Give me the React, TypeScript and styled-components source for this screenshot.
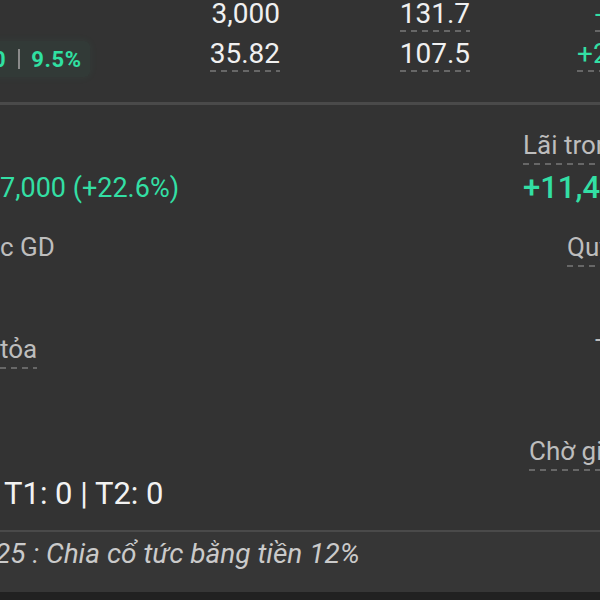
import styled, { createGlobalStyle, css } from "styled-components";

const GlobalStyle = createGlobalStyle`
  html, body {
    margin: 0;
    padding: 0;
    background: #333333;
  }
  body {
    font-family: Roboto, "Noto Sans", sans-serif;
  }
  #root {
    width: 600px;
    height: 600px;
    overflow: hidden;
  }
`;

const dashed = css`
  background-image: linear-gradient(to right, #676767 0 6px, transparent 6px);
  background-size: 11px 2px;
  background-repeat: repeat-x;
  background-position: left bottom;
`;

const Screen = styled.div`
  width: 600px;
  height: 600px;
  overflow: hidden;
  background: #333333;
  display: flex;
  flex-direction: column;
  color: #f0f0f0;
`;

const QuoteTable = styled.div`
  display: grid;
  grid-template-columns: 100px 180px 190px 130px;
  grid-auto-rows: 40px;
  height: 102px;
  flex-shrink: 0;
`;

const Value = styled.span<{ $dashed?: boolean }>`
  justify-self: end;
  align-self: start;
  font-size: 28px;
  line-height: 28px;
  padding-bottom: 4px;
  color: #f0f0f0;
  white-space: nowrap;
  ${(p) => p.$dashed && dashed}
`;

const Change = styled.span<{ $shift: number }>`
  justify-self: start;
  align-self: start;
  margin-left: ${(p) => p.$shift}px;
  font-size: 28px;
  line-height: 28px;
  padding-bottom: 4px;
  color: #33dfa4;
  white-space: nowrap;
  ${dashed}
`;

const Chip = styled.div`
  align-self: start;
  justify-self: start;
  margin: 1px 0 0 -7px;
  height: 36px;
  display: inline-flex;
  align-items: center;
  padding-right: 8px;
  background: rgba(48, 224, 160, 0.045);
  box-shadow: 0 0 10px rgba(48, 224, 160, 0.06);
  border-radius: 0 6px 6px 0;
  font-size: 22px;
  font-weight: 700;
  letter-spacing: 0.6px;
  color: #30e0a2;
`;

const ChipBar = styled.span`
  width: 2px;
  height: 20px;
  margin: 0 11px 0 12px;
  background: #8a8a8a;
`;

const Divider = styled.div<{ $size: number }>`
  height: ${(p) => p.$size}px;
  background: #4a4a4a;
  flex-shrink: 0;
`;

const Summary = styled.div`
  display: flex;
  height: 425px;
  flex-shrink: 0;
  padding-top: 25px;
  box-sizing: border-box;
`;

const Column = styled.div<{ $width?: number }>`
  display: flex;
  flex-direction: column;
  gap: 28px;
  width: ${(p) => (p.$width ? `${p.$width}px` : "auto")};
  flex: ${(p) => (p.$width ? "none" : 1)};
  white-space: nowrap;
`;

const Stat = styled.div`
  display: flex;
  flex-direction: column;
  align-items: flex-start;
  gap: 7px;
  height: 74px;
`;

const Label = styled.span<{ $dashed?: boolean; $indent?: number; $raise?: number }>`
  display: inline-block;
  height: 30px;
  margin-left: ${(p) => p.$indent ?? 0}px;
  margin-top: ${(p) => -(p.$raise ?? 0)}px;
  padding-bottom: 5px;
  font-size: 26px;
  line-height: 30px;
  color: #bdbdbd;
  ${(p) => p.$dashed && dashed}
`;

const StatValue = styled.span<{
  $tone: "up" | "plain";
  $size: number;
  $weight?: number;
  $indent?: number;
}>`
  height: 32px;
  margin-left: ${(p) => p.$indent ?? 0}px;
  font-size: ${(p) => p.$size}px;
  line-height: 32px;
  font-weight: ${(p) => p.$weight ?? 400};
  color: ${(p) => (p.$tone === "up" ? "#33dfa4" : "#f2f2f2")};
`;

const NewsBar = styled.div`
  height: 60px;
  flex-shrink: 0;
  background: #363636;
  padding-top: 7px;
  box-sizing: border-box;
  font-size: 28px;
  line-height: 30px;
  font-style: italic;
  color: #cacaca;
  white-space: nowrap;

  span {
    margin-left: -5px;
  }
`;

const BottomShade = styled.div`
  flex: 1;
  background: #212121;
`;

const App = () => {
  return (
    <Screen>
      <GlobalStyle />
      <QuoteTable>
        <span />
        <Value>3,000</Value>
        <Value $dashed>131.7</Value>
        <Change $shift={125}>-</Change>

        <Chip>
          0<ChipBar />9.5%
        </Chip>
        <Value $dashed>35.82</Value>
        <Value $dashed>107.5</Value>
        <Change $shift={107}>+2.10</Change>
      </QuoteTable>
      <Divider $size={3} />
      <Summary>
        <Column $width={523}>
          <Stat>
            <Label />
            <StatValue $tone="up" $size={27}>
              7,000 (+22.6%)
            </StatValue>
          </Stat>
          <Stat>
            <Label>c GD</Label>
          </Stat>
          <Stat>
            <Label $dashed>tỏa</Label>
          </Stat>
          <Stat>
            <Label />
            <StatValue $tone="plain" $size={31} $indent={4}>
              T1: 0 | T2: 0
            </StatValue>
          </Stat>
        </Column>
        <Column>
          <Stat>
            <Label $dashed>Lãi trong ngày</Label>
            <StatValue $tone="up" $size={31} $weight={500}>
              +11,400,000
            </StatValue>
          </Stat>
          <Stat>
            <Label $dashed $indent={44}>
              Quyền
            </Label>
          </Stat>
          <Stat>
            <Label $indent={72} $raise={10}>
              -
            </Label>
          </Stat>
          <Stat>
            <Label $dashed $indent={6}>
              Chờ giao
            </Label>
          </Stat>
        </Column>
      </Summary>
      <Divider $size={2} />
      <NewsBar>
        <span>25 : Chia cổ tức bằng tiền 12%</span>
      </NewsBar>
      <BottomShade />
    </Screen>
  );
};

export default App;
